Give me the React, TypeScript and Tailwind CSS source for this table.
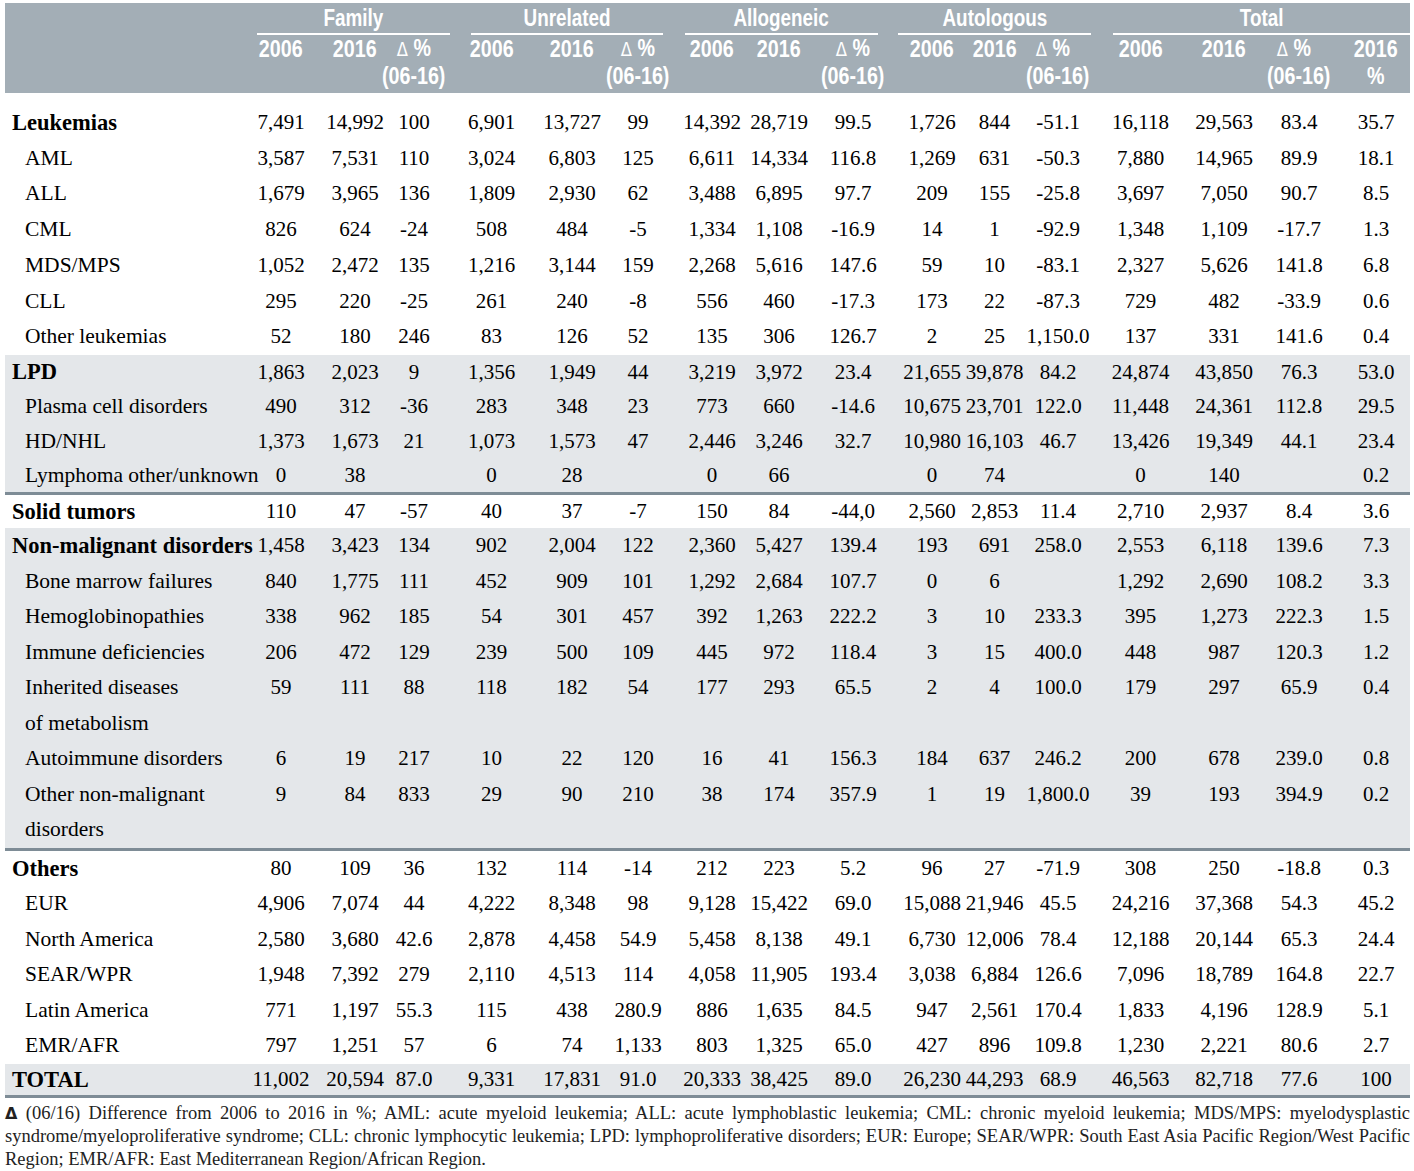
import React from "react";

// column geometry: width + padding so that each centred value lands where the print has it
const cols = [
  { w: "w-[69px]", pad: "pl-0 pr-[5px]" },
  { w: "w-[66px]", pad: "pl-[8px] pr-0" },
  { w: "w-[68px]", pad: "pl-0 pr-[8px]" },
  { w: "w-[79px]", pad: "pl-0 pr-0" },
  { w: "w-[74px]", pad: "pl-[8px] pr-0" },
  { w: "w-[70px]", pad: "pl-0 pr-[4px]" },
  { w: "w-[70px]", pad: "pl-[4px] pr-0" },
  { w: "w-[71px]", pad: "pl-0 pr-[3px]" },
  { w: "w-[76px]", pad: "pl-0 pr-[2px]" },
  { w: "w-[71px]", pad: "pl-[9px] pr-0" },
  { w: "w-[63px]", pad: "pl-0 pr-0" },
  { w: "w-[73px]", pad: "pl-0 pr-[9px]" },
  { w: "w-[83px]", pad: "pl-0 pr-0" },
  { w: "w-[79px]", pad: "pl-[5px] pr-0" },
  { w: "w-[76px]", pad: "pl-0 pr-0" },
  { w: "w-[73px]", pad: "pl-[5px] pr-0" },
];

const groupsHead = [
  { name: "Family", m: "ml-[8px] mr-[2px]" },
  { name: "Unrelated", m: "ml-[19px] mr-[12px]" },
  { name: "Allogeneic", m: "ml-[10px] mr-[14px]" },
  { name: "Autologous", m: "ml-[6px] mr-[8px]" },
  { name: "Total", m: "ml-[14px] mr-0" },
];

interface Row {
  label: string[];
  bold?: boolean;
  v: string[];
}

interface Group {
  rows: Row[];
  band: boolean;
  line: boolean;
  lead: string;
}

const r = (label: string | string[], v: string, bold = false): Row => ({
  label: Array.isArray(label) ? label : [label],
  bold,
  v: v.split(" ").map((x) => (x === "_" ? "" : x)),
});

const groups: Group[] = [
  {
    band: false,
    line: false,
    lead: "leading-[35.7px]",
    rows: [
      r("Leukemias", "7,491 14,992 100 6,901 13,727 99 14,392 28,719 99.5 1,726 844 -51.1 16,118 29,563 83.4 35.7", true),
      r("AML", "3,587 7,531 110 3,024 6,803 125 6,611 14,334 116.8 1,269 631 -50.3 7,880 14,965 89.9 18.1"),
      r("ALL", "1,679 3,965 136 1,809 2,930 62 3,488 6,895 97.7 209 155 -25.8 3,697 7,050 90.7 8.5"),
      r("CML", "826 624 -24 508 484 -5 1,334 1,108 -16.9 14 1 -92.9 1,348 1,109 -17.7 1.3"),
      r("MDS/MPS", "1,052 2,472 135 1,216 3,144 159 2,268 5,616 147.6 59 10 -83.1 2,327 5,626 141.8 6.8"),
      r("CLL", "295 220 -25 261 240 -8 556 460 -17.3 173 22 -87.3 729 482 -33.9 0.6"),
      r("Other leukemias", "52 180 246 83 126 52 135 306 126.7 2 25 1,150.0 137 331 141.6 0.4"),
    ],
  },
  {
    band: true,
    line: true,
    lead: "leading-[34.3px]",
    rows: [
      r("LPD", "1,863 2,023 9 1,356 1,949 44 3,219 3,972 23.4 21,655 39,878 84.2 24,874 43,850 76.3 53.0", true),
      r("Plasma cell disorders", "490 312 -36 283 348 23 773 660 -14.6 10,675 23,701 122.0 11,448 24,361 112.8 29.5"),
      r("HD/NHL", "1,373 1,673 21 1,073 1,573 47 2,446 3,246 32.7 10,980 16,103 46.7 13,426 19,349 44.1 23.4"),
      r("Lymphoma other/unknown", "0 38 _ 0 28 _ 0 66 _ 0 74 _ 0 140 _ 0.2"),
    ],
  },
  {
    band: false,
    line: false,
    lead: "leading-[33px]",
    rows: [r("Solid tumors", "110 47 -57 40 37 -7 150 84 -44,0 2,560 2,853 11.4 2,710 2,937 8.4 3.6", true)],
  },
  {
    band: true,
    line: true,
    lead: "leading-[35.5px]",
    rows: [
      r("Non-malignant disorders", "1,458 3,423 134 902 2,004 122 2,360 5,427 139.4 193 691 258.0 2,553 6,118 139.6 7.3", true),
      r("Bone marrow failures", "840 1,775 111 452 909 101 1,292 2,684 107.7 0 6 _ 1,292 2,690 108.2 3.3"),
      r("Hemoglobinopathies", "338 962 185 54 301 457 392 1,263 222.2 3 10 233.3 395 1,273 222.3 1.5"),
      r("Immune deficiencies", "206 472 129 239 500 109 445 972 118.4 3 15 400.0 448 987 120.3 1.2"),
      r(["Inherited diseases", "of metabolism"], "59 111 88 118 182 54 177 293 65.5 2 4 100.0 179 297 65.9 0.4"),
      r("Autoimmune disorders", "6 19 217 10 22 120 16 41 156.3 184 637 246.2 200 678 239.0 0.8"),
      r(["Other non-malignant", "disorders"], "9 84 833 29 90 210 38 174 357.9 1 19 1,800.0 39 193 394.9 0.2"),
    ],
  },
  {
    band: false,
    line: false,
    lead: "leading-[35.5px]",
    rows: [
      r("Others", "80 109 36 132 114 -14 212 223 5.2 96 27 -71.9 308 250 -18.8 0.3", true),
      r("EUR", "4,906 7,074 44 4,222 8,348 98 9,128 15,422 69.0 15,088 21,946 45.5 24,216 37,368 54.3 45.2"),
      r("North America", "2,580 3,680 42.6 2,878 4,458 54.9 5,458 8,138 49.1 6,730 12,006 78.4 12,188 20,144 65.3 24.4"),
      r("SEAR/WPR", "1,948 7,392 279 2,110 4,513 114 4,058 11,905 193.4 3,038 6,884 126.6 7,096 18,789 164.8 22.7"),
      r("Latin America", "771 1,197 55.3 115 438 280.9 886 1,635 84.5 947 2,561 170.4 1,833 4,196 128.9 5.1"),
      r("EMR/AFR", "797 1,251 57 6 74 1,133 803 1,325 65.0 427 896 109.8 1,230 2,221 80.6 2.7"),
    ],
  },
  {
    band: true,
    line: true,
    lead: "leading-[31px]",
    rows: [r("TOTAL", "11,002 20,594 87.0 9,331 17,831 91.0 20,333 38,425 89.0 26,230 44,293 68.9 46,563 82,718 77.6 100", true)],
  },
];

// narrow bold header lettering (no condensed face installed, so squeeze a normal one)
function Narrow({ children, left = false }: { children: React.ReactNode; left?: boolean }) {
  if (left) {
    return (
      <div className="flex justify-center">
        <div className="w-[63px]">
          <span className="block origin-left scale-x-[0.82] whitespace-nowrap">{children}</span>
        </div>
      </div>
    );
  }
  return (
    <div className="flex justify-center">
      <span className="block scale-x-[0.82] whitespace-nowrap">{children}</span>
    </div>
  );
}

const Delta = () => (
  <>
    <span className="font-normal font-['DejaVu_Sans',sans-serif] text-[20px]">Δ</span> %
  </>
);

export default function App() {
  return (
    <div className="min-h-screen w-[1414px] bg-white pl-[5px] pt-[3px] text-black font-['Liberation_Serif',serif]">
      <table className="w-[1405px] table-fixed border-collapse">
        <colgroup>
          <col className="w-[244px]" />
          {cols.map((c, i) => (
            <col key={i} className={c.w} />
          ))}
        </colgroup>
        <thead className="bg-[#a3aeb6] font-['Liberation_Sans',sans-serif] font-bold text-white">
          <tr>
            <th rowSpan={3} className="p-0"></th>
            {groupsHead.map((g, i) => (
              <th key={g.name} colSpan={i === 4 ? 4 : 3} className="p-0 pt-[1px] align-top">
                <div className={`${g.m} border-b-2 border-white text-[23px] leading-[29px]`}>
                  <Narrow>{g.name}</Narrow>
                </div>
              </th>
            ))}
          </tr>
          <tr>
            {cols.map((c, i) => {
              const k = i % 3;
              let txt: React.ReactNode = k === 0 ? "2006" : k === 1 ? "2016" : <Delta />;
              if (i === 15) txt = "2016";
              return (
                <th key={i} className={`${c.pad} py-0 text-[24px] leading-[26px]`}>
                  <Narrow left={i === 11 || i === 14}>{txt}</Narrow>
                </th>
              );
            })}
          </tr>
          <tr>
            {cols.map((c, i) => (
              <th key={i} className={`${c.pad} pt-0 pb-[3px] text-[24px] leading-[28px]`}>
                <Narrow>{i === 15 ? "%" : i % 3 === 2 ? "(06-16)" : ""}</Narrow>
              </th>
            ))}
          </tr>
        </thead>
        <tbody>
          <tr>
            <td colSpan={17} className="h-[12px] p-0"></td>
          </tr>
          {groups.map((g, gi) =>
            g.rows.map((row, ri) => {
              const last = ri === g.rows.length - 1;
              return (
                <tr
                  key={`${gi}-${ri}`}
                  className={`${g.band ? "bg-[#e4e7ea]" : "bg-white"} ${g.line && last ? "border-b-[3px] border-[#7e8c96]" : ""}`}
                >
                  <td
                    className={`p-0 ${row.bold ? "pl-[7px] font-bold text-[22.5px]" : "pl-[20px] text-[21.5px]"} ${g.lead} align-top whitespace-nowrap`}
                  >
                    {row.label.map((l, li) => (
                      <div key={li}>{l}</div>
                    ))}
                  </td>
                  {row.v.map((val, vi) => (
                    <td
                      key={vi}
                      className={`${cols[vi].pad} py-0 ${g.lead} align-top text-center text-[21px] whitespace-nowrap`}
                    >
                      {val}
                    </td>
                  ))}
                </tr>
              );
            })
          )}
        </tbody>
      </table>
      <div className="mt-[4px] w-[1405px] text-[18.5px] leading-[22.5px] text-[#222]">
        <div className="text-justify [text-align-last:justify] whitespace-nowrap">
          <span className="font-bold font-['DejaVu_Sans',sans-serif] text-[16px]">Δ</span> (06/16) Difference from 2006 to 2016 in %; AML: acute myeloid leukemia; ALL: acute lymphoblastic leukemia; CML: chronic myeloid leukemia; MDS/MPS: myelodysplastic
        </div>
        <div className="text-justify [text-align-last:justify] whitespace-nowrap">
          syndrome/myeloproliferative syndrome; CLL: chronic lymphocytic leukemia; LPD: lymphoproliferative disorders; EUR: Europe; SEAR/WPR: South East Asia Pacific Region/West Pacific
        </div>
        <div>Region; EMR/AFR: East Mediterranean Region/African Region.</div>
      </div>
    </div>
  );
}
